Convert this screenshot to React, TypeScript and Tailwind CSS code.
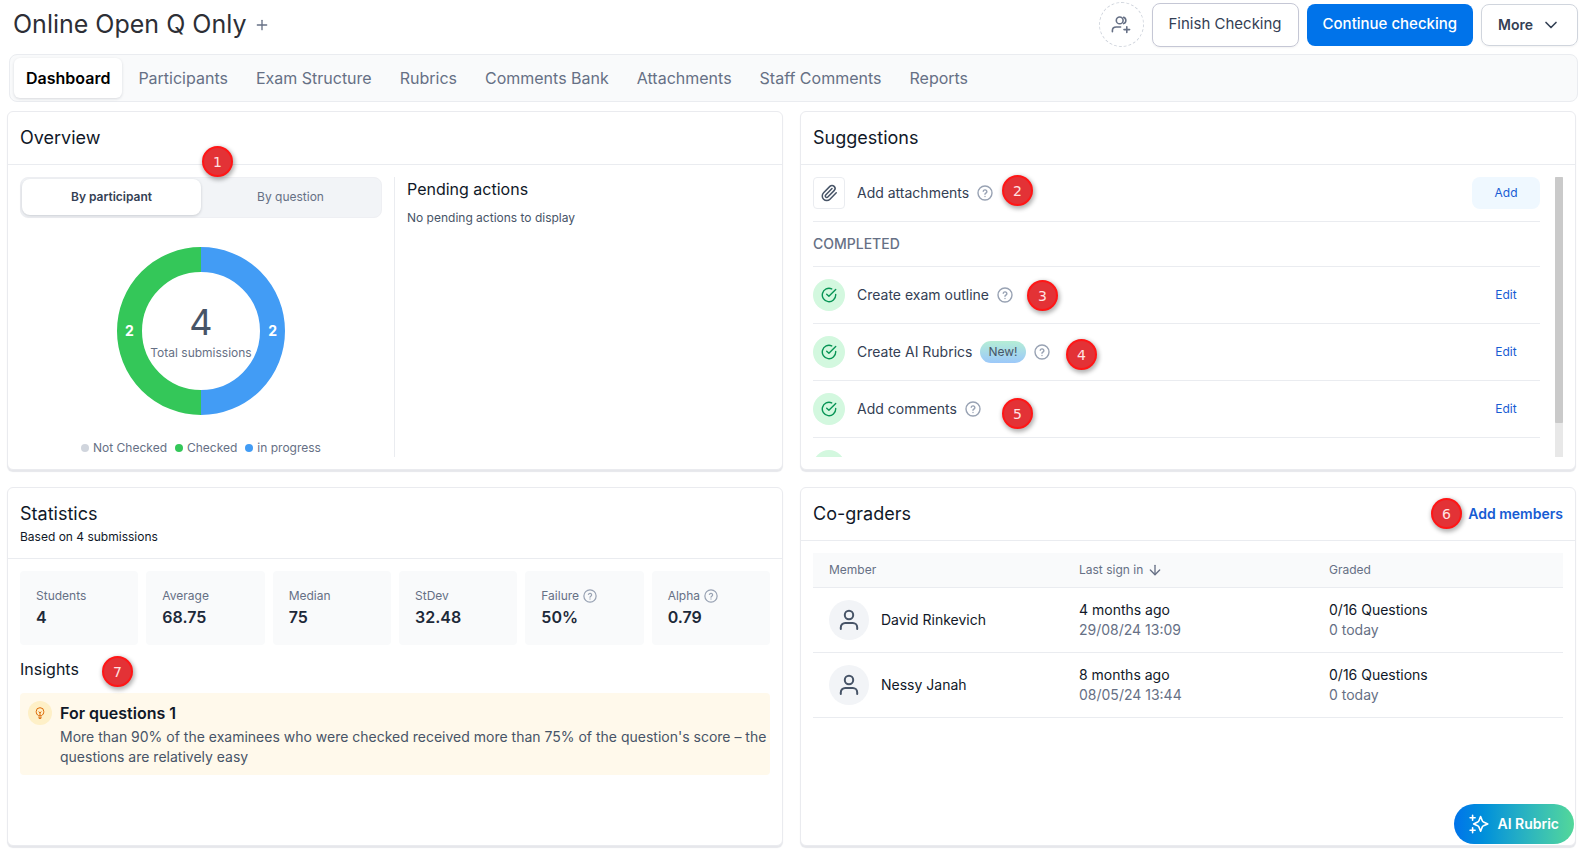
import type { ReactNode } from 'react';
import { ArrowDown, ChevronDown, Paperclip, Plus } from 'lucide-react';

const TABS = [
  'Dashboard',
  'Participants',
  'Exam Structure',
  'Rubrics',
  'Comments Bank',
  'Attachments',
  'Staff Comments',
  'Reports',
];

const COMPLETED = [
  { label: 'Create exam outline', isNew: false },
  { label: 'Create AI Rubrics', isNew: true },
  { label: 'Add comments', isNew: false },
];

const STATS = [
  { label: 'Students', value: '4', help: false },
  { label: 'Average', value: '68.75', help: false },
  { label: 'Median', value: '75', help: false },
  { label: 'StDev', value: '32.48', help: false },
  { label: 'Failure', value: '50%', help: true },
  { label: 'Alpha', value: '0.79', help: true },
];

const MEMBERS = [
  { name: 'David Rinkevich', ago: '4 months ago', date: '29/08/24 13:09' },
  { name: 'Nessy Janah', ago: '8 months ago', date: '08/05/24 13:44' },
];

const LEGEND = [
  { label: 'Not Checked', dot: 'bg-[#d0d5dd]' },
  { label: 'Checked', dot: 'bg-[#34c759]' },
  { label: 'in progress', dot: 'bg-[#429cf5]' },
];

function HelpIcon({ className }: { className: string }) {
  return (
    <svg className={className} viewBox="0 0 16 16" fill="none" stroke="#98a2b3" strokeWidth="1.4" strokeLinecap="round" strokeLinejoin="round" aria-hidden="true">
      <circle cx="8" cy="8" r="7" />
      <path d="M6.2 6.2a1.9 1.9 0 0 1 3.7.6c0 1.2-1.9 1.5-1.9 2.5" />
      <path d="M8 11.4v.1" />
    </svg>
  );
}

function CheckIcon() {
  return (
    <svg className="size-4" viewBox="0 0 16 16" fill="none" stroke="#079455" strokeWidth="1.4" strokeLinecap="round" strokeLinejoin="round" aria-hidden="true">
      <path d="M14.7 7.4V8a6.7 6.7 0 1 1-4-6.1" />
      <path d="M5.7 7.2l2.2 2L14.7 2.6" />
    </svg>
  );
}

function UsersPlusIcon() {
  return (
    <svg className="size-5" viewBox="0 0 20 20" fill="none" stroke="#667085" strokeWidth="1.6" strokeLinecap="round" strokeLinejoin="round" aria-hidden="true">
      <circle cx="8.7" cy="5.4" r="3.4" />
      <path d="M12.6 2.2a3.4 3.4 0 0 1 0 6.4" />
      <path d="M1.4 16.8v-1.2c0-2.2 1.6-3.6 3.8-3.6h4.4" />
      <path d="M15.8 11.8v5.6M13 14.6h5.6" />
    </svg>
  );
}

function UserIcon() {
  return (
    <svg className="size-6" viewBox="0 0 24 24" fill="none" stroke="#475467" strokeWidth="2" strokeLinecap="round" strokeLinejoin="round" aria-hidden="true">
      <circle cx="12" cy="7" r="4.2" />
      <path d="M3.8 21v-1.6a4.4 4.4 0 0 1 4.4-4.4h7.6a4.4 4.4 0 0 1 4.4 4.4V21" />
    </svg>
  );
}

function BulbIcon() {
  return (
    <svg className="size-3" viewBox="0 0 12 12" fill="none" stroke="#dc6803" strokeWidth="1" strokeLinecap="round" strokeLinejoin="round" aria-hidden="true">
      <path d="M4.4 8.6C3 8 2.2 6.3 2.2 4.5a3.8 3.8 0 0 1 7.6 0C9.8 6.3 9 8 7.6 8.6z" />
      <path d="M4.7 10.2h2.6M5.2 11.6h1.6M6 8.4V5.8M4.9 4.9L6 5.8l1.1-.9" />
    </svg>
  );
}

function SparkleIcon() {
  return (
    <svg className="size-5" viewBox="0 0 20 20" fill="none" stroke="white" strokeWidth="1.6" strokeLinecap="round" strokeLinejoin="round" aria-hidden="true">
      <path d="M11.6 2.6l1.7 4.2c.2.6.6 1 1.2 1.2l4.3 1.9-4.3 1.8c-.6.2-1 .6-1.2 1.2l-1.7 4.3-1.7-4.3c-.2-.6-.6-1-1.2-1.2L4.6 9.9l4.1-1.9c.6-.2 1-.6 1.2-1.2z" />
      <path d="M3.6 1.2v5M1.1 3.7h5M3.6 13.7v5M1.1 16.2h5" />
    </svg>
  );
}

function Marker({ n, className }: { n: number; className: string }) {
  return (
    <span
      className={`absolute z-10 flex size-[31px] items-center justify-center rounded-full border-2 border-[#ff1616] bg-[#e33236] font-['DejaVu_Sans',sans-serif] text-sm text-[#ffe3e3] shadow-[1px_2px_4px_1px_rgba(0,0,0,0.3)] ${className}`}
    >
      {n}
    </span>
  );
}

function Panel({ title, subtitle, action, children }: { title: string; subtitle?: string; action?: ReactNode; children: ReactNode }) {
  return (
    <section className="relative flex min-w-0 flex-col rounded-md border border-[#eaebef] bg-white shadow-[0_2px_1px_#e6e7eb]">
      <header className="flex items-center justify-between border-b border-[#eaecf0] p-3">
        <div>
          <h2 className="text-lg/7 text-[#101828]">{title}</h2>
          {subtitle && <p className="text-xs/[18px] text-[#101828]">{subtitle}</p>}
        </div>
        {action}
      </header>
      <div className="flex-1 p-3">{children}</div>
    </section>
  );
}

function Donut() {
  return (
    <div className="relative mt-[29px] size-[168px] self-center">
      <svg className="size-full" viewBox="0 0 168 168" fill="none" strokeWidth="25" aria-hidden="true">
        <path d="M84 155.5a71.5 71.5 0 0 1 0-143" stroke="#34c759" />
        <path d="M84 12.5a71.5 71.5 0 0 1 0 143" stroke="#429cf5" />
      </svg>
      <div className="absolute inset-0 flex flex-col items-center justify-center">
        <span className="text-4xl/11 text-[#475467]">4</span>
        <span className="text-xs/[18px] whitespace-nowrap text-[#667085]">Total submissions</span>
      </div>
      <div className="absolute inset-0 flex items-center justify-between px-2 text-sm font-bold text-white">
        <span>2</span>
        <span>2</span>
      </div>
    </div>
  );
}

function Overview() {
  return (
    <Panel title="Overview">
      <div className="flex h-[280px]">
        <div className="flex w-1/2 flex-col border-r border-[#eaecf0] pr-3">
          <div className="flex rounded-lg border border-[#eeeff3] bg-[#f2f4f7] px-px pt-px pb-0.5 text-xs">
            <button className="h-9 flex-1 rounded-lg bg-white font-semibold text-[#344054] shadow-[0_1px_3px_rgba(16,24,40,0.18)]">By participant</button>
            <button className="h-9 flex-1 text-[#667085]">By question</button>
          </div>
          <Donut />
          <ul className="mt-auto flex justify-center gap-2 text-xs/[18px] text-[#667085]">
            {LEGEND.map(item => (
              <li key={item.label} className="flex items-center gap-1">
                <span className={`size-2 rounded-full ${item.dot}`} />
                {item.label}
              </li>
            ))}
          </ul>
        </div>
        <div className="flex-1 pl-3">
          <h3 className="text-base/6 text-[#101828]">Pending actions</h3>
          <p className="mt-2 text-xs/[18px] text-[#475467]">No pending actions to display</p>
        </div>
      </div>
      <Marker n={1} className="top-[34px] left-[194px]" />
    </Panel>
  );
}

function CheckBadge() {
  return (
    <span className="flex size-8 items-center justify-center rounded-full bg-[#d3f8df]">
      <CheckIcon />
    </span>
  );
}

function Suggestions() {
  return (
    <Panel title="Suggestions">
      <div className="flex h-[280px] gap-[15px]">
        <div className="flex-1 overflow-hidden">
          <div className="flex items-center gap-3 border-b border-[#eaecf0] pb-3">
            <span className="flex size-8 items-center justify-center rounded-sm border border-[#eaecf0]">
              <Paperclip className="size-[18px] text-[#475467]" />
            </span>
            <span className="text-sm text-[#344054]">Add attachments</span>
            <HelpIcon className="-ml-1 size-4" />
            <button className="ml-auto h-8 w-[68px] rounded-lg bg-[#eff8ff] text-xs text-[#175cd3]">Add</button>
          </div>
          <h3 className="flex h-[45px] items-center border-b border-[#eaecf0] text-sm font-medium text-[#667085]">COMPLETED</h3>
          {COMPLETED.map(item => (
            <div key={item.label} className="flex items-center gap-2 border-b border-[#eaecf0] py-3">
              <CheckBadge />
              <span className="ml-1 text-sm text-[#344054]">{item.label}</span>
              {item.isNew && (
                <span className="rounded-full bg-linear-to-b from-[#b5edd5] to-[#9cc8f9] px-2 text-xs/[22px] text-[#475467]">New!</span>
              )}
              <HelpIcon className="size-4" />
              <button className="ml-auto h-8 w-[68px] text-xs text-[#175cd3]">Edit</button>
            </div>
          ))}
          <div className="py-3">
            <CheckBadge />
          </div>
        </div>
        <div className="w-2 bg-[#e8e8e8]">
          <div className="h-[88%] rounded-[1px] bg-[#cacaca]" />
        </div>
      </div>
      <Marker n={2} className="top-[63px] left-[201px]" />
      <Marker n={3} className="top-[168px] left-[226px]" />
      <Marker n={4} className="top-[227px] left-[265px]" />
      <Marker n={5} className="top-[286px] left-[201px]" />
    </Panel>
  );
}

function Statistics() {
  return (
    <Panel title="Statistics" subtitle="Based on 4 submissions">
      <dl className="grid grid-cols-6 gap-2">
        {STATS.map(stat => (
          <div key={stat.label} className="rounded-sm bg-[#f9fafb] p-4">
            <dt className="flex items-center gap-1 text-xs/[18px] text-[#667085]">
              {stat.label}
              {stat.help && <HelpIcon className="size-3.5" />}
            </dt>
            <dd className="text-base/6 font-semibold text-[#1d2939]">{stat.value}</dd>
          </div>
        ))}
      </dl>
      <h3 className="my-3 text-base/6 text-[#101828]">Insights</h3>
      <div className="flex gap-2 rounded-sm bg-[#fff9eb] py-2 pl-2">
        <span className="flex size-6 shrink-0 items-center justify-center rounded-full bg-[#fef0c7]">
          <BulbIcon />
        </span>
        <div>
          <h4 className="mb-0.5 text-base/6 font-semibold text-[#101828]">For questions 1</h4>
          <p className="text-sm/5 text-[#475467]">
            More than 90% of the examinees who were checked received more than 75% of the question's score – the questions are relatively easy
          </p>
        </div>
      </div>
      <Marker n={7} className="top-[168px] left-[94px]" />
    </Panel>
  );
}

function CoGraders() {
  return (
    <Panel title="Co-graders" action={<a href="#members" className="text-sm font-semibold text-[#175cd3]">Add members</a>}>
      <table className="w-full table-fixed text-left text-sm/5">
        <thead>
          <tr className="h-[34px] border-b border-[#eaecf0] bg-[#f9fafb] text-xs text-[#667085]">
            <th scope="col" className="px-4 font-normal">Member</th>
            <th scope="col" className="px-4 font-normal">
              <span className="flex items-center gap-1">
                Last sign in
                <ArrowDown className="size-4" />
              </span>
            </th>
            <th scope="col" className="px-4 font-normal">Graded</th>
          </tr>
        </thead>
        <tbody>
          {MEMBERS.map(member => (
            <tr key={member.name} className="border-b border-[#eaecf0] text-[#101828]">
              <td className="px-4 py-3">
                <div className="flex items-center gap-3">
                  <span className="flex size-10 items-center justify-center rounded-full bg-[#f2f4f7]">
                    <UserIcon />
                  </span>
                  {member.name}
                </div>
              </td>
              <td className="px-4 py-3">
                {member.ago}
                <div className="text-[#667085]">{member.date}</div>
              </td>
              <td className="px-4 py-3">
                0/16 Questions
                <div className="text-[#667085]">0 today</div>
              </td>
            </tr>
          ))}
        </tbody>
      </table>
      <Marker n={6} className="top-[10px] right-[113px]" />
    </Panel>
  );
}

export default function App() {
  return (
    <div className="flex min-h-screen flex-col bg-white font-['Inter',sans-serif]">
      <header className="flex items-center gap-2 pt-0.5 pr-1 pl-[13px]">
        <h1 className="text-[25px] text-[#2d2f36]">Online Open Q Only</h1>
        <button aria-label="Add tag" className="text-[#667085]">
          <Plus className="size-4" />
        </button>
        <button aria-label="Invite members" className="ml-auto flex size-[45px] items-center justify-center rounded-full border border-dashed border-[#d0d5dd]">
          <UsersPlusIcon />
        </button>
        <button className="h-11 rounded-lg border border-[#c5c7d5] px-4 text-[15px] text-[#344054] shadow-xs">Finish Checking</button>
        <button className="h-[42px] rounded-lg bg-[#0073ea] px-4 text-[15px] font-medium text-white">Continue checking</button>
        <button className="flex h-[42px] items-center gap-2 rounded-lg border border-[#d0d5dd] px-4 text-sm font-semibold text-[#344054] shadow-xs">
          More
          <ChevronDown className="size-5" />
        </button>
      </header>
      <nav className="mt-[7px] mr-1 ml-[9px] flex gap-1 rounded-lg border border-[#eaecf0] bg-[#f9fafb] px-1 py-[3px]">
        {TABS.map((tab, i) => (
          <a
            key={tab}
            href={`#${tab.toLowerCase().replace(' ', '-')}`}
            className={`rounded-md px-3 text-base/10 ${i === 0 ? 'bg-white font-semibold text-black shadow-[0_1px_3px_rgba(16,24,40,0.14)]' : 'text-[#667085]'}`}
          >
            {tab}
          </a>
        ))}
      </nav>
      <main className="mt-[9px] mr-1.5 mb-2 ml-[7px] grid flex-1 grid-cols-2 grid-rows-[auto_1fr] gap-[17px]">
        <Overview />
        <Suggestions />
        <Statistics />
        <CoGraders />
      </main>
      <button className="fixed right-2 bottom-[10px] flex h-10 items-center gap-2 rounded-full bg-linear-to-r from-[#0073ea] to-[#53d799] px-[15px] text-sm font-semibold text-white">
        <SparkleIcon />
        AI Rubric
      </button>
    </div>
  );
}
